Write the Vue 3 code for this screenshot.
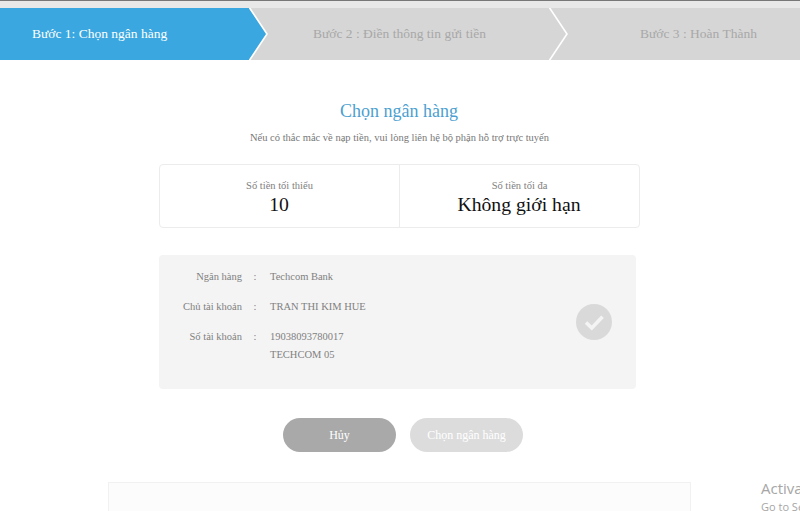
<script setup>
const steps = [
  { label: 'Bước 1: Chọn ngân hàng', active: true },
  { label: 'Bước 2 : Điền thông tin gửi tiền' },
  { label: 'Bước 3 : Hoàn Thành' }
]

const limits = [
  { label: 'Số tiền tối thiểu', value: '10' },
  { label: 'Số tiền tối đa', value: 'Không giới hạn' }
]
</script>

<template>
  <div class="page">
    <div class="topbar"></div>

    <div class="steps">
      <div v-for="(step, i) in steps" :key="i" class="step" :class="{ active: step.active }">
        <span class="step-label">{{ step.label }}</span>
        <svg v-if="i < 2" class="chevron" width="20" height="52" viewBox="0 0 20 52">
          <path v-if="step.active" d="M0 0 L18 26 L0 52 Z" fill="#3aa7e0" />
          <path d="M0 -1 L18 26 L0 53" fill="none" stroke="#fff" stroke-width="1.6" />
        </svg>
      </div>
    </div>

    <div class="content">
      <h1 class="title">Chọn ngân hàng</h1>
      <p class="note">Nếu có thắc mắc về nạp tiền, vui lòng liên hệ bộ phận hỗ trợ trực tuyến</p>

      <div class="limits">
        <div v-for="item in limits" :key="item.label" class="limit">
          <div class="limit-label">{{ item.label }}</div>
          <div class="limit-value">{{ item.value }}</div>
        </div>
      </div>

      <div class="bank">
        <div class="bank-info">
          <div class="row">
            <span class="key">Ngân hàng</span><span class="colon">:</span>
            <span class="val">Techcom Bank</span>
          </div>
          <div class="row">
            <span class="key">Chủ tài khoản</span><span class="colon">:</span>
            <span class="val">TRAN THI KIM HUE</span>
          </div>
          <div class="row">
            <span class="key">Số tài khoản</span><span class="colon">:</span>
            <span class="val">19038093780017<br />TECHCOM 05</span>
          </div>
        </div>
        <svg class="check" width="36" height="36" viewBox="0 0 36 36">
          <circle cx="18" cy="18" r="18" fill="#d9d9d9" />
          <path d="M10 18.5 L15.8 24 L26.5 12.8" fill="none" stroke="#f4f4f4" stroke-width="3.6" />
        </svg>
      </div>

      <div class="actions">
        <button class="btn cancel">Hủy</button>
        <button class="btn choose">Chọn ngân hàng</button>
      </div>

      <div class="footer-box"></div>
    </div>

    <div class="watermark">
      <div class="wm-title">Activate Windows</div>
      <div class="wm-sub">Go to Settings to activate Windows.</div>
    </div>
  </div>
</template>

<style scoped>
.page {
  position: relative;
  width: 800px;
  height: 511px;
  overflow: hidden;
  background: #fff;
  font-family: "Liberation Serif", "Times New Roman", serif;
}

.topbar {
  height: 7px;
  border-top: 1px solid #777;
  background: #e8e8e8;
}

.steps {
  display: flex;
  height: 52px;
  background: #d6d6d6;
}

.step {
  position: relative;
  display: flex;
  align-items: center;
  width: 300px;
  font-size: 13.5px;
  color: #a8a8a8;
}

.step:nth-child(1) {
  width: 249px;
  padding-left: 32px;
  box-sizing: border-box;
  background: #3aa7e0;
  color: #fff;
}

.step:nth-child(2) {
  padding-left: 64px;
  box-sizing: border-box;
}

.step:nth-child(3) {
  width: 251px;
  padding-left: 91px;
  box-sizing: border-box;
}

.chevron {
  position: absolute;
  top: 0;
  left: 100%;
  z-index: 1;
  overflow: hidden;
}

.content {
  display: flex;
  flex-direction: column;
  align-items: center;
  width: 799px;
}

.title {
  margin: 40px 1px 0 0;
  font-size: 18px;
  line-height: 22px;
  font-weight: normal;
  color: #4c9fd0;
}

.note {
  margin: 9px 0 0;
  font-size: 10.5px;
  line-height: 14px;
  color: #777;
}

.limits {
  display: flex;
  width: 481px;
  height: 64px;
  margin-top: 19px;
  box-sizing: border-box;
  border: 1px solid #ececec;
  border-radius: 4px;
}

.limit {
  flex: 1;
  display: flex;
  flex-direction: column;
  align-items: center;
  padding-top: 14px;
}

.limit + .limit {
  border-left: 1px solid #ececec;
}

.limit-label {
  font-size: 10.5px;
  line-height: 13px;
  color: #808080;
}

.limit-value {
  margin-right: 1px;
  font-size: 19.7px;
  line-height: 24px;
  color: #111;
}

.bank {
  display: flex;
  align-items: center;
  justify-content: space-between;
  width: 477px;
  height: 134px;
  margin: 27px 4px 0 0;
  padding: 13px 24px 0 0;
  box-sizing: border-box;
  background: #f4f4f4;
  border-radius: 4px;
}

.bank-info {
  align-self: flex-start;
}

.row {
  display: flex;
  margin-bottom: 12px;
  font-size: 10.5px;
  line-height: 18px;
  color: #808080;
}

.key {
  width: 83px;
  text-align: right;
}

.colon {
  width: 28px;
  padding-right: 2px;
  box-sizing: border-box;
  text-align: center;
}

.check {
  margin-top: -13px;
}

.actions {
  display: flex;
  gap: 14px;
  margin: 29px 0 0 7px;
}

.btn {
  width: 113px;
  height: 34px;
  border: none;
  border-radius: 17px;
  padding: 0;
  font-family: inherit;
  font-size: 12px;
  color: #fff;
}

.cancel {
  background: #a9a9a9;
}

.choose {
  background: #dcdcdc;
}

.footer-box {
  width: 583px;
  height: 40px;
  margin-top: 30px;
  box-sizing: border-box;
  border: 1px solid #f1f1f1;
  background: #fcfcfc;
}

.watermark {
  position: absolute;
  left: 761px;
  top: 478px;
  white-space: nowrap;
  font-family: "Open Sans", sans-serif;
  color: #a6a6a6;
}

.wm-title {
  font-size: 15px;
  line-height: 20px;
}

.wm-sub {
  font-size: 11px;
  line-height: 15px;
  margin-top: 1px;
}
</style>
